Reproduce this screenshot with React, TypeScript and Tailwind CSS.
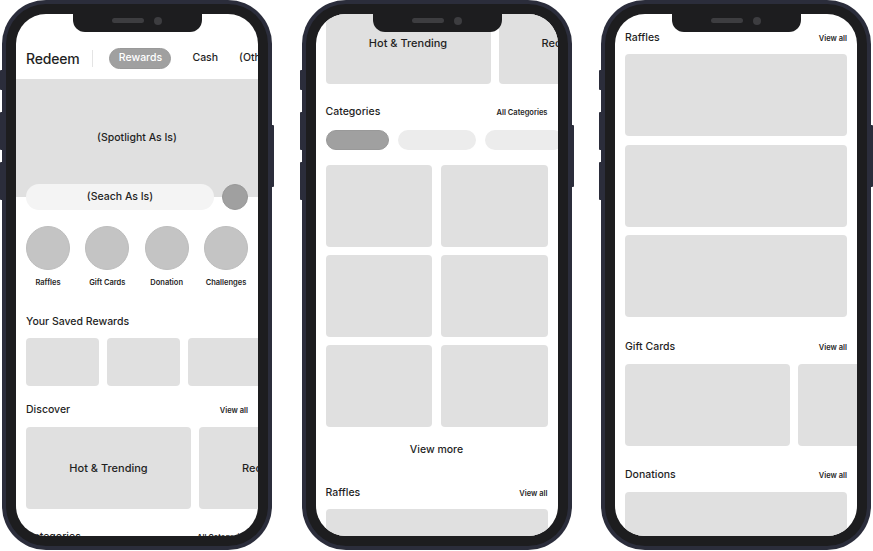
import React from "react";

const rows = [0, 1, 2];

const SectionHeader = ({
  title,
  action,
  className = "",
}: {
  title: string;
  action?: string;
  className?: string;
}) => (
  <div className={`flex items-baseline justify-between px-[10px] h-[14px] ${className}`}>
    <span className="text-[10.5px] leading-[14px] font-medium text-[#1f1f1f]">{title}</span>
    {action && (
      <span className="text-[7.5px] leading-[14px] font-semibold text-[#1f1f1f]">{action}</span>
    )}
  </div>
);

const Block = ({
  className = "",
  children,
}: {
  className?: string;
  children?: React.ReactNode;
}) => (
  <div
    className={`shrink-0 rounded-[4px] bg-[#e0e0e0] flex items-center justify-center text-[11px] font-medium text-[#1f1f1f] whitespace-nowrap ${className}`}
  >
    {children}
  </div>
);

// the whole scrolling screen; each phone shows it at a different scroll offset
const RedeemScreen = ({ offset }: { offset: string }) => (
  <div className={`flex flex-col ${offset}`}>
    {/* header */}
    <div className="h-[65px] pt-[33px] pl-[10px]">
      <div className="h-[22px] flex items-center whitespace-nowrap text-[#1f1f1f]">
        <span className="shrink-0 text-[14px] font-medium tracking-[-0.2px]">Redeem</span>
        <span className="shrink-0 ml-[13px] w-px h-[17px] bg-[#e4e4e4]" />
        <span className="shrink-0 ml-[16px] w-[62px] h-[21px] rounded-full bg-[#a0a0a0] border border-[#999] text-white text-[10.5px] font-medium flex items-center justify-center">
          Rewards
        </span>
        <span className="shrink-0 ml-[21px] text-[10.5px] font-medium">Cash</span>
        <span className="shrink-0 ml-[21px] text-[10.5px] font-medium">(Others)</span>
      </div>
    </div>

    {/* spotlight */}
    <div className="h-[118px] bg-[#e0e0e0] flex items-center justify-center text-[10.5px] font-medium text-[#1f1f1f]">
      (Spotlight As Is)
    </div>

    {/* search */}
    <div className="relative mt-[-13px] px-[10px] flex items-center gap-[8px]">
      <div className="w-[188px] h-[26px] rounded-full bg-[#f4f4f4] flex items-center justify-center text-[10.5px] font-medium text-[#1f1f1f]">
        (Seach As Is)
      </div>
      <div className="w-[26px] h-[26px] rounded-full bg-[#a0a0a0] border border-[#989898]" />
    </div>

    {/* quick links */}
    <div className="mt-[16px] px-[10px] flex justify-between">
      {["Raffles", "Gift Cards", "Donation", "Challenges"].map((label) => (
        <div key={label} className="w-[44px] flex flex-col items-center">
          <div className="w-[44px] h-[44px] rounded-full bg-[#c4c4c4] border border-[#bdbdbd]" />
          <span className="mt-[8px] text-[7.5px] leading-[10px] font-semibold text-[#1f1f1f] whitespace-nowrap">
            {label}
          </span>
        </div>
      ))}
    </div>

    <SectionHeader title="Your Saved Rewards" className="mt-[27px]" />
    <div className="mt-[9px] pl-[10px] flex gap-[8px]">
      {[0, 1, 2, 3].map((i) => (
        <Block key={i} className="w-[73px] h-[48px]" />
      ))}
    </div>

    <SectionHeader title="Discover" action="View all" className="mt-[17px]" />
    <div className="mt-[10px] pl-[10px] flex gap-[8px]">
      <Block className="w-[165px] h-[82px]">Hot &amp; Trending</Block>
      <Block className="w-[165px] h-[82px]">Recommended</Block>
    </div>

    <SectionHeader title="Categories" action="All Categories" className="mt-[21px]" />
    <div className="mt-[11px] pl-[10px] flex gap-[9px]">
      <div className="shrink-0 w-[63px] h-[20px] rounded-full bg-[#a0a0a0] border border-[#999]" />
      <div className="shrink-0 w-[78px] h-[20px] rounded-full bg-[#ececec]" />
      <div className="shrink-0 w-[78px] h-[20px] rounded-full bg-[#ececec]" />
    </div>
    <div className="mt-[15px] px-[10px] grid grid-cols-2 gap-x-[9px] gap-y-[8px]">
      {[0, 1, 2, 3, 4, 5].map((i) => (
        <Block key={i} className="h-[82px]" />
      ))}
    </div>
    <div className="mt-[16px] h-[14px] leading-[14px] text-center text-[10.5px] font-medium text-[#1f1f1f]">
      View more
    </div>

    <SectionHeader title="Raffles" action="View all" className="mt-[29px]" />
    <div className="mt-[9px] px-[10px] flex flex-col gap-[8.5px]">
      {rows.map((i) => (
        <Block key={i} className="h-[82px]" />
      ))}
    </div>

    <SectionHeader title="Gift Cards" action="View all" className="mt-[23px]" />
    <div className="mt-[10px] pl-[10px] flex gap-[8px]">
      <Block className="w-[165px] h-[82px]" />
      <Block className="w-[165px] h-[82px]" />
    </div>

    <SectionHeader title="Donations" action="View all" className="mt-[22px]" />
    <div className="mt-[10px] px-[10px] flex flex-col gap-[8px]">
      <Block className="h-[82px]" />
      <Block className="h-[82px]" />
    </div>
  </div>
);

const Phone = ({ offset }: { offset: string }) => (
  <div className="relative shrink-0 w-[270px] h-[550px]">
    {/* side buttons */}
    <span className="absolute left-[-2px] top-[70px] w-[3px] h-[20px] rounded-l-[1px] bg-[#2b2d3b]" />
    <span className="absolute left-[-2px] top-[112px] w-[3px] h-[38px] rounded-l-[1px] bg-[#2b2d3b]" />
    <span className="absolute left-[-2px] top-[162px] w-[3px] h-[38px] rounded-l-[1px] bg-[#2b2d3b]" />
    <span className="absolute right-[-2px] top-[125px] w-[3px] h-[62px] rounded-r-[1px] bg-[#2b2d3b]" />

    <div className="relative h-full rounded-[44px] bg-[#2b2d3b] p-[4px]">
      <div className="h-full rounded-[40px] bg-[#1d1d1f] p-[10px]">
        <div className="relative h-full rounded-[30px] bg-white overflow-hidden">
          <RedeemScreen offset={offset} />
          {/* notch */}
          <div className="absolute top-0 left-[57px] w-[129px] h-[18px] rounded-b-[12px] bg-[#1d1d1f]">
            <span className="absolute left-[39px] top-[4px] w-[32px] h-[5px] rounded-full bg-[#3d3d40]" />
            <span className="absolute left-[81px] top-[2.5px] w-[8px] h-[8px] rounded-full bg-[#3d3d40]" />
          </div>
        </div>
      </div>
    </div>
  </div>
);

export default function App() {
  return (
    <div
      className="w-[873px] h-[551px] bg-white flex gap-[29.5px] pl-[2px] overflow-hidden"
      style={{ fontFamily: "Inter, 'Noto Sans', sans-serif" }}
    >
      <Phone offset="mt-0" />
      <Phone offset="mt-[-425px]" />
      <Phone offset="mt-[-880px]" />
    </div>
  );
}
